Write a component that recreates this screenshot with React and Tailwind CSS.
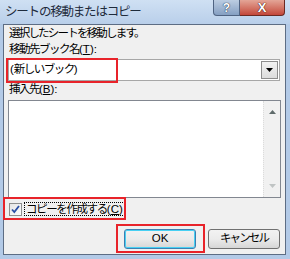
import React from 'react';

const jp = "font-['Liberation_Sans','Noto_Sans_CJK_JP',sans-serif]";

// latin parts keep normal spacing, kana/kanji are squeezed a bit
const L = ({ children, u }) => (
  <span className={`tracking-normal ${u ? 'underline' : ''}`}>{children}</span>
);

const TitleBar = () => (
  <div className="h-[24px] flex items-start bg-gradient-to-b from-[#cfe0f3] to-[#b9cfea]">
    <div className={`${jp} pl-[5px] pt-[5px] text-[12.5px] leading-[14px] tracking-[-1.2px] text-[#1e2b3c]`}>
      シートの移動またはコピー
    </div>
    <div className="ml-auto mr-[5px] flex">
      <div className="w-[27px] h-[16px] rounded-bl-[4px] border border-t-0 border-[#4f6382] bg-gradient-to-b from-[#bccde2] to-[#859fc2] flex items-center justify-center">
        <span className="font-['Liberation_Sans',sans-serif] font-bold text-[12px] leading-none text-white [text-shadow:0_0_1px_#1d2c44,0_0_1px_#1d2c44]">?</span>
      </div>
      <div className="w-[45px] h-[16px] rounded-br-[4px] border border-l-0 border-t-0 border-[#6b2a22] bg-gradient-to-b from-[#e3a597] to-[#c2463a] flex items-center justify-center">
        <span className="font-['Liberation_Sans',sans-serif] font-bold text-[13px] leading-none text-white [text-shadow:0_0_1px_#3a0d08,0_0_1px_#3a0d08]">X</span>
      </div>
    </div>
  </div>
);

const Combo = () => (
  <div className="mt-[3px] ml-[4px] mr-[5px] h-[22px] border border-[#a7a7a7] bg-white flex items-center">
    <span className={`${jp} pl-[1px] text-[11.5px] tracking-[-1.5px] text-black`}>
      <L>(</L>新しいブック<L>)</L>
    </span>
    <div className="ml-auto mr-[1px] w-[17px] h-[18px] border border-[#8d8d8d] bg-gradient-to-b from-[#f2f2f2] to-[#dcdcdc] flex items-center justify-center">
      <svg width="7" height="4" viewBox="0 0 7 4"><path d="M0 0h7L3.5 4z" fill="#000" /></svg>
    </div>
  </div>
);

const ListBox = () => (
  <div className="mt-[4px] ml-[4px] mr-[4px] h-[98px] border border-[#828790] bg-white flex">
    <div className="ml-auto w-[17px] border-l border-dotted border-[#dcdcdc] bg-[#f1f1f1] flex flex-col items-center justify-between py-[9px]">
      <svg width="7" height="4" viewBox="0 0 7 4"><path d="M3.5 0L7 4H0z" fill="#5f6b6b" /></svg>
      <svg width="7" height="4" viewBox="0 0 7 4"><path d="M0 0h7L3.5 4z" fill="#c0c4c4" /></svg>
    </div>
  </div>
);

const Button = ({ children, primary }) => (
  <div
    className={`w-[72px] h-[20px] rounded-[3px] border flex items-center justify-center bg-gradient-to-b from-[#f2f2f2] via-[#ebebeb] to-[#d6d6d6] ${primary ? 'border-[#3c7fb1] shadow-[inset_0_0_0_1px_#48d0f3]' : 'border-[#707070]'}`}
  >
    <span className={`${jp} text-[11.5px] tracking-[-1.9px] text-black`}>{children}</span>
  </div>
);

export default function App() {
  return (
    <div className="w-[290px] h-[259px] bg-[#b3cae7] flex flex-col overflow-hidden">
      <TitleBar />
      <div className="ml-[3px] mr-[4px] h-[231px] border border-[#5d6d84] bg-[#f0f0f0] relative flex flex-col">
        <div className={`${jp} mt-[1px] ml-[5px] h-[14px] leading-[14px] text-[11.5px] tracking-[-1.8px] text-black`}>
          選択したシートを移動します。
        </div>
        <div className={`${jp} mt-[2px] ml-[5px] h-[14px] leading-[14px] text-[11.5px] tracking-[-1.5px] text-black`}>
          移動先ブック名<L>(</L><L u>T</L><L>):</L>
        </div>
        <Combo />
        <div className={`${jp} mt-[1px] ml-[5px] h-[14px] leading-[14px] text-[11.5px] tracking-[-1.5px] text-black`}>
          挿入先<L>(</L><L u>B</L><L>):</L>
        </div>
        <ListBox />
        <div className="mt-[1px] ml-[5px] h-[20px] flex items-center">
          <div className="w-[13px] h-[13px] border border-[#8e8f8f] bg-gradient-to-br from-[#e6e6e6] to-[#fbfbfb] flex items-center justify-center">
            <svg width="9" height="9" viewBox="0 0 9 9">
              <path d="M1 4.5l2.3 2.5L8 1" fill="none" stroke="#2a4fa5" strokeWidth="1.8" />
            </svg>
          </div>
          <div className={`${jp} ml-[2px] px-[1px] h-[14px] leading-[12px] border border-dotted border-black text-[11.5px] tracking-[-1.4px] text-black`}>
            コピーを作成する<L>(</L><L u>C</L><L>)</L>
          </div>
        </div>
        <div className="mt-[10px] mr-[5px] flex justify-end gap-[12px]">
          <Button primary><L>OK</L></Button>
          <Button>キャンセル</Button>
        </div>

        {/* red annotation boxes */}
        <div className="absolute left-[2px] top-[33px] w-[112px] h-[25px] border-2 border-[#e8232a]" />
        <div className="absolute left-[-1px] top-[172px] w-[123px] h-[23px] border-2 border-[#e8232a]" />
        <div className="absolute left-[112px] top-[199px] w-[89px] h-[29px] border-2 border-[#e8232a]" />
      </div>
    </div>
  );
}
